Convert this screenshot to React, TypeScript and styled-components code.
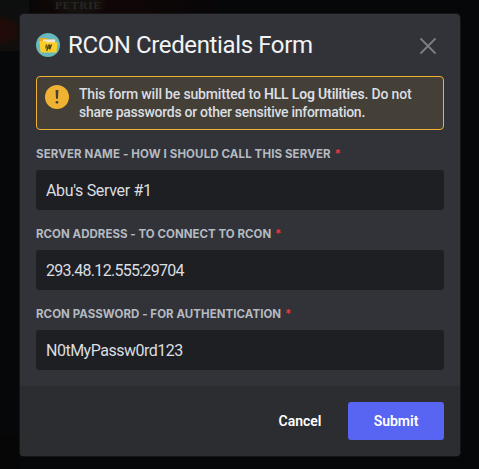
import React from "react";
import styled, { createGlobalStyle } from "styled-components";

const GlobalStyle = createGlobalStyle`
  *, *::before, *::after { box-sizing: border-box; }
  html, body { margin: 0; height: 100%; overflow: hidden; background: #060709; }
  body, button, input { font-family: Roboto, "Noto Sans", sans-serif; }
`;

const Backdrop = styled.main`
  position: relative;
  width: 479px;
  height: 469px;
  padding: 14px 19px 13px 20px;
  background:
    radial-gradient(ellipse 20px 16px at 2px 31px, #210b08 0 55%, transparent) 0 0 / 29px 51px no-repeat,
    linear-gradient(#0d0e0e, #100f0c) 0 0 / 29px 51px no-repeat,
    radial-gradient(ellipse 30px 20px at 50px 0, #14110f 60%, transparent) 29px 0 / 130px 14px no-repeat,
    linear-gradient(90deg, #0c0706, #110607 40%, #080607) 33px 0 / 181px 14px no-repeat,
    linear-gradient(#060606, #060606) 0 435px / 20px 34px no-repeat,
    #060709;
`;

const PosterText = styled.div`
  position: absolute;
  top: 0;
  left: 55px;
  color: #2a2724;
  font: 700 11px/10px "Liberation Serif", serif;
  letter-spacing: 1px;
`;

const Modal = styled.form`
  position: relative;
  width: 440px;
  height: 442px;
  display: flex;
  flex-direction: column;
  overflow: hidden;
  border-radius: 4px;
  background: #313338;
  box-shadow: 0 0 0 1px rgba(30, 31, 34, 0.6);
`;

const Header = styled.header`
  height: 62px;
  padding: 0 22px 0 16px;
  display: flex;
  align-items: center;
  gap: 8px;
`;

const Title = styled.h1`
  flex: 1;
  margin: 0;
  color: #f2f3f5;
  font-size: 24px;
  font-weight: 400;
  line-height: 30px;
  letter-spacing: -0.38px;
  white-space: nowrap;
`;

const CloseButton = styled.button`
  display: flex;
  padding: 2px 0 0;
  border: 0;
  background: none;
  color: #7d7f84;
`;

const Body = styled.div`
  flex: 1;
  padding: 0 16px;
`;

const Notice = styled.div`
  height: 54px;
  padding: 8px;
  display: flex;
  gap: 10px;
  border: 1px solid #f0b232;
  border-radius: 4px;
  background: #443f37;

  svg { flex: none; }
`;

const NoticeText = styled.p`
  margin: 0;
  color: #dbdee1;
  font-size: 14px;
  font-weight: 500;
  line-height: 18px;
  white-space: nowrap;
`;

const NoticeLine = styled.span<{ $spacing: number }>`
  display: block;
  letter-spacing: ${(p) => p.$spacing}px;

  strong { font-weight: 600; }
`;

const Field = styled.label`
  display: block;
  margin-top: 16px;
`;

const FieldLabel = styled.span<{ $spacing: number }>`
  display: block;
  height: 16px;
  margin-bottom: 8px;
  color: #b5bac1;
  font-family: Inter, sans-serif;
  font-size: 11.5px;
  font-weight: 700;
  line-height: 16px;
  letter-spacing: ${(p) => p.$spacing}px;
  white-space: nowrap;
`;

const Required = styled.span`
  margin-left: 4px;
  color: #f23f42;
  font-weight: 500;
`;

const TextInput = styled.input<{ $spacing: number }>`
  display: block;
  width: 100%;
  height: 40px;
  padding: 10px;
  border: 0;
  border-radius: 3px;
  outline: 0;
  background: #1e1f22;
  color: #dbdee1;
  font-size: 16px;
  letter-spacing: ${(p) => p.$spacing}px;
`;

const Footer = styled.footer`
  height: 70px;
  padding: 16px;
  display: flex;
  justify-content: flex-end;
  background: #2b2d31;
`;

const Button = styled.button<{ $primary?: boolean }>`
  width: 96px;
  height: 38px;
  padding: 0;
  border: 0;
  border-radius: 3px;
  background: ${(p) => (p.$primary ? "#5865f2" : "transparent")};
  color: #fff;
  font-size: 14px;
  font-weight: 600;
  line-height: 16px;
`;

const AppAvatar = () => (
  <svg width="24" height="24" viewBox="0 0 24 24">
    <circle cx="12" cy="12" r="12" fill="#68b9bd" />
    <path d="M4 5h6l2 1.500h8v5H4z" fill="#e9a91c" />
    <path d="M7 6.500h12v5H7z" fill="#f2e7cf" />
    <path d="M3.500 8.200H10l1.500 1H21.500L20.500 19.500H4.500z" fill="#fbce2b" />
    <path d="M10.300 11.500l-.4 4M12.500 11.500l-1.800 6.500M14 11.500l-1.300 4.500M15.600 11.500l-1.900 5" stroke="#403617" strokeWidth="1.100" fill="none" />
  </svg>
);

const CloseIcon = () => (
  <svg width="20" height="20" viewBox="0 0 20 20" fill="none" stroke="currentColor" strokeWidth="1.800">
    <path d="M2.500 2.500l15 15M17.500 2.500l-15 15" />
  </svg>
);

const WarningIcon = () => (
  <svg width="24" height="24" viewBox="0 0 24 24">
    <circle cx="12" cy="12" r="12" fill="#f0b232" />
    <path d="M10.600 5h2.800l-.4 8.800h-2z" fill="#443f37" />
    <circle cx="12" cy="17.300" r="1.400" fill="#443f37" />
  </svg>
);

const fields = [
  { label: "SERVER NAME - HOW I SHOULD CALL THIS SERVER", value: "Abu's Server #1", labelSpacing: 0.12, valueSpacing: -0.33 },
  { label: "RCON ADDRESS - TO CONNECT TO RCON", value: "293.48.12.555:29704", labelSpacing: 0.03, valueSpacing: -0.72 },
  { label: "RCON PASSWORD - FOR AUTHENTICATION", value: "N0tMyPassw0rd123", labelSpacing: 0.05, valueSpacing: -0.5 },
];

export default function App() {
  return (
    <>
      <GlobalStyle />
      <Backdrop>
        <PosterText aria-hidden="true">PETRIE</PosterText>
        <Modal onSubmit={(e) => e.preventDefault()}>
          <Header>
            <AppAvatar />
            <Title>RCON Credentials Form</Title>
            <CloseButton type="button" aria-label="Close"><CloseIcon /></CloseButton>
          </Header>
          <Body>
            <Notice>
              <WarningIcon />
              <NoticeText>
                <NoticeLine $spacing={-0.17}>This form will be submitted to <strong>HLL Log Utilities</strong>. Do not</NoticeLine>
                <NoticeLine $spacing={-0.27}>share passwords or other sensitive information.</NoticeLine>
              </NoticeText>
            </Notice>
            {fields.map((f) => (
              <Field key={f.label}>
                <FieldLabel $spacing={f.labelSpacing}>{f.label}<Required>*</Required></FieldLabel>
                <TextInput $spacing={f.valueSpacing} defaultValue={f.value} />
              </Field>
            ))}
          </Body>
          <Footer>
            <Button type="button">Cancel</Button>
            <Button type="submit" $primary>Submit</Button>
          </Footer>
        </Modal>
      </Backdrop>
    </>
  );
}
